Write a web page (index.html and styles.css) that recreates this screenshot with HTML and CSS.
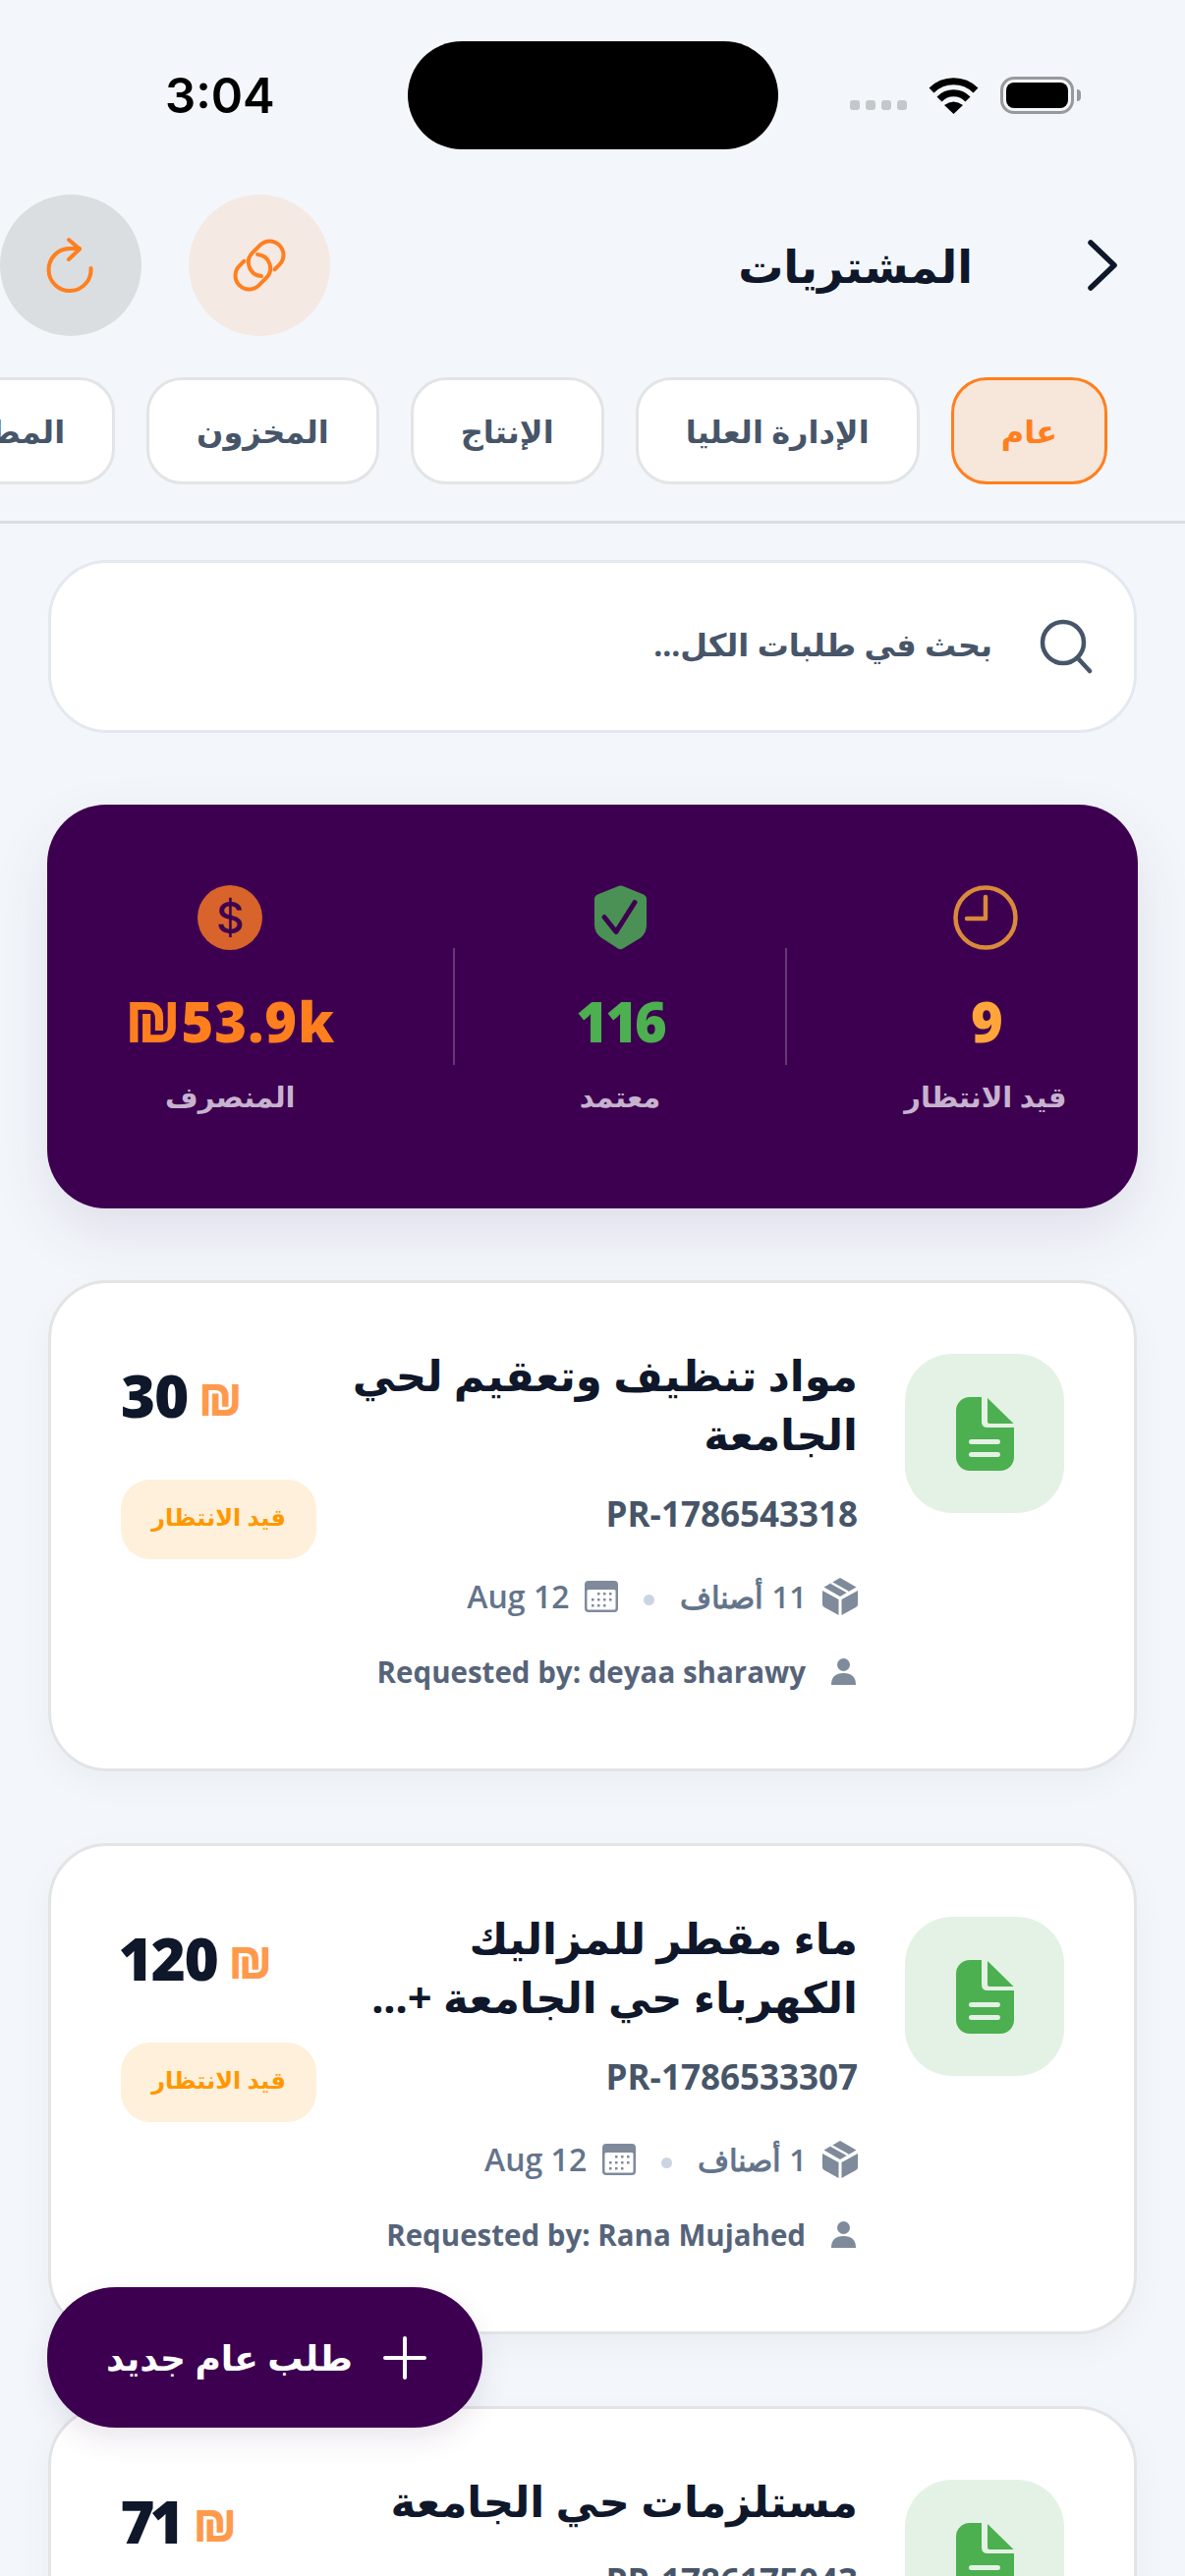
FILE: index.html
```html
<!DOCTYPE html>
<html lang="ar" dir="rtl">
<head>
    <meta charset="UTF-8">
    <meta name="viewport" content="width=device-width, initial-scale=1.0">
    <title>المشتريات</title>
    <link rel="stylesheet" href="styles.css">
</head>
<body>
<div class="screen">
    <div class="status-bar" dir="ltr">
        <span class="status-time">3:04</span>
        <div class="island"></div>
        <div class="status-icons">
            <div class="signal"><i></i><i></i><i></i><i></i></div>
            <svg class="wifi" width="51" height="37" viewBox="0 0 51 37">
                <path d="M3 13 A32 32 0 0 1 48 13" fill="none" stroke="#000" stroke-width="7"/>
                <path d="M11 22 A20 20 0 0 1 40 22" fill="none" stroke="#000" stroke-width="7"/>
                <path d="M25.5 37 L16 28 Q25.5 21 35 28 Z" fill="#000"/>
            </svg>
            <div class="battery"><div class="battery-fill"></div></div>
            <div class="battery-nub"></div>
        </div>
    </div>

    <div class="top-bar">
        <svg class="chevron" width="30" height="52" viewBox="0 0 30 52">
            <path d="M3 3 L27 26 L3 49" fill="none" stroke="#0f172a" stroke-width="5.5" stroke-linecap="round" stroke-linejoin="round"/>
        </svg>
        <h1 class="page-title">المشتريات</h1>
        <div class="top-actions">
            <div class="round-btn link-btn">
                <svg width="54" height="54" viewBox="0 0 54 54" fill="none" stroke="#ff7f1f" stroke-width="4" stroke-linecap="round">
                    <g transform="rotate(-45 27 27)">
                        <path d="M35 41 H41.8 A14 14 0 0 0 41.8 13 H31.2 A14 14 0 0 0 20.6 36.2"/>
                        <path d="M19 13 H12.2 A14 14 0 0 0 12.2 41 H22.8 A14 14 0 0 0 33.4 17.8"/>
                    </g>
                </svg>
            </div>
            <div class="round-btn refresh-btn">
                <svg width="54" height="54" viewBox="0 0 54 54" fill="none" stroke="#ff7f1f" stroke-width="4" stroke-linecap="round" stroke-linejoin="round">
                    <path d="M47.5 30 A21.5 21.5 0 1 1 26 10 H36"/>
                    <path d="M25 1 L36 10.5 L25 21"/>
                </svg>
            </div>
        </div>
    </div>

    <div class="tabs">
        <div class="tab tab-active">عام</div>
        <div class="tab">الإدارة العليا</div>
        <div class="tab">الإنتاج</div>
        <div class="tab">المخزون</div>
        <div class="tab">المطبخ</div>
    </div>

    <div class="search-box">
        <svg width="54" height="56" viewBox="0 0 54 56" fill="none" stroke="#475569" stroke-width="4.5" stroke-linecap="round">
            <circle cx="24" cy="24" r="21"/>
            <path d="M39 40 L51 53"/>
        </svg>
        <span class="search-text">بحث في طلبات الكل...</span>
    </div>

    <div class="stats-card">
        <div class="stat stat-pending">
            <svg class="stat-icon" width="66" height="66" viewBox="0 0 66 66" fill="none" stroke="#d98a3a" stroke-width="4.5" stroke-linecap="round" stroke-linejoin="round">
                <circle cx="33" cy="33" r="30.5"/>
                <path d="M33 12 V34 H14"/>
            </svg>
            <div class="stat-value value-orange">9</div>
            <div class="stat-label">قيد الانتظار</div>
        </div>
        <div class="stat-divider"></div>
        <div class="stat stat-approved">
            <svg class="stat-icon" width="53" height="66" viewBox="0 0 53 65">
                <path d="M26.5 0 Q28.5 0 30.5 1 L50 9 Q53 10.500 53 13 V40 Q53 48 47 53 L29 64 Q26.5 65.500 24 64 L7 53 Q0 48 0 40 V13 Q0 10.500 3 9 L23 1 Q25 0 26.5 0 Z" fill="#4b9155"/>
                <path d="M10 32 L22 47 L41 17" fill="none" stroke="#3d0050" stroke-width="5" stroke-linecap="round" stroke-linejoin="round"/>
            </svg>
            <div class="stat-value value-green">116</div>
            <div class="stat-label">معتمد</div>
        </div>
        <div class="stat-divider"></div>
        <div class="stat stat-spent">
            <div class="stat-icon dollar">$</div>
            <div class="stat-value value-deep" dir="ltr">₪53.9k</div>
            <div class="stat-label">المنصرف</div>
        </div>
    </div>

    <div class="card">
        <div class="doc-box">
            <svg width="59" height="75" viewBox="0 0 59 75">
                <path d="M14 0 H26 V25 Q26 31 32 31 H59 V61 A14 14 0 0 1 45 75 H14 A14 14 0 0 1 0 61 V14 A14 14 0 0 1 14 0 Z" fill="#4caf50"/>
                <path d="M32 1 L58.500 27 H34 Q32 27 32 25 Z" fill="#4caf50"/>
                <rect x="13" y="43" width="32" height="5" rx="2.500" fill="#e4f2e5"/>
                <rect x="13" y="56" width="32" height="5" rx="2.500" fill="#e4f2e5"/>
            </svg>
        </div>
        <div class="card-main">
            <div class="card-title">مواد تنظيف وتعقيم لحي<br>الجامعة</div>
            <div class="card-number" dir="ltr">PR-1786543318</div>
            <div class="card-meta">
                <svg width="36" height="38" viewBox="0 0 36 38" fill="#7f8a9b">
                    <path d="M18 0 L34.500 9.500 L18 19 L1.500 9.500 Z"/>
                    <path d="M9 5 L26 14.500" stroke="#fff" stroke-width="2.500"/>
                    <path d="M0 13 L16.500 22 V38 L2 30 Q0 29 0 27 Z"/>
                    <path d="M36 13 L19.500 22 V38 L34 30 Q36 29 36 27 Z"/>
                </svg>
                <span>11 أصناف</span>
                <i class="meta-dot"></i>
                <svg width="34" height="32" viewBox="0 0 34 32">
                    <rect width="34" height="32" rx="4" fill="#7f8a9b"/>
                    <rect x="2.500" y="9" width="29" height="20.500" rx="1.500" fill="#fff"/>
                    <g fill="#7f8a9b">
                        <rect x="13" y="12" width="2.500" height="2.500"/><rect x="19" y="12" width="2.500" height="2.500"/><rect x="25" y="12" width="2.500" height="2.500"/>
                        <rect x="7" y="18" width="2.500" height="2.500"/><rect x="13" y="18" width="2.500" height="2.500"/><rect x="19" y="18" width="2.500" height="2.500"/><rect x="25" y="18" width="2.500" height="2.500"/>
                        <rect x="7" y="24" width="2.500" height="2.500"/><rect x="13" y="24" width="2.500" height="2.500"/><rect x="19" y="24" width="2.500" height="2.500"/>
                    </g>
                </svg>
                <span class="meta-date" dir="ltr">Aug 12</span>
            </div>
            <div class="card-user">
                <svg width="25" height="27" viewBox="0 0 25 27" fill="#7f8a9b">
                    <circle cx="12.500" cy="6.500" r="6.500"/>
                    <path d="M0 27 Q0 15 12.500 15 T25 27 Z"/>
                </svg>
                <span dir="ltr">Requested by: deyaa sharawy</span>
            </div>
        </div>
        <div class="card-side">
            <div class="amount"><span class="shekel">₪</span><span>30</span></div>
            <div class="badge">قيد الانتظار</div>
        </div>
    </div>

    <div class="card">
        <div class="doc-box">
            <svg width="59" height="75" viewBox="0 0 59 75">
                <path d="M14 0 H26 V25 Q26 31 32 31 H59 V61 A14 14 0 0 1 45 75 H14 A14 14 0 0 1 0 61 V14 A14 14 0 0 1 14 0 Z" fill="#4caf50"/>
                <path d="M32 1 L58.500 27 H34 Q32 27 32 25 Z" fill="#4caf50"/>
                <rect x="13" y="43" width="32" height="5" rx="2.500" fill="#e4f2e5"/>
                <rect x="13" y="56" width="32" height="5" rx="2.500" fill="#e4f2e5"/>
            </svg>
        </div>
        <div class="card-main">
            <div class="card-title">ماء مقطر للمزاليك<br>الكهرباء حي الجامعة +...</div>
            <div class="card-number" dir="ltr">PR-1786533307</div>
            <div class="card-meta">
                <svg width="36" height="38" viewBox="0 0 36 38" fill="#7f8a9b">
                    <path d="M18 0 L34.500 9.500 L18 19 L1.500 9.500 Z"/>
                    <path d="M9 5 L26 14.500" stroke="#fff" stroke-width="2.500"/>
                    <path d="M0 13 L16.500 22 V38 L2 30 Q0 29 0 27 Z"/>
                    <path d="M36 13 L19.500 22 V38 L34 30 Q36 29 36 27 Z"/>
                </svg>
                <span>1 أصناف</span>
                <i class="meta-dot"></i>
                <svg width="34" height="32" viewBox="0 0 34 32">
                    <rect width="34" height="32" rx="4" fill="#7f8a9b"/>
                    <rect x="2.500" y="9" width="29" height="20.500" rx="1.500" fill="#fff"/>
                    <g fill="#7f8a9b">
                        <rect x="13" y="12" width="2.500" height="2.500"/><rect x="19" y="12" width="2.500" height="2.500"/><rect x="25" y="12" width="2.500" height="2.500"/>
                        <rect x="7" y="18" width="2.500" height="2.500"/><rect x="13" y="18" width="2.500" height="2.500"/><rect x="19" y="18" width="2.500" height="2.500"/><rect x="25" y="18" width="2.500" height="2.500"/>
                        <rect x="7" y="24" width="2.500" height="2.500"/><rect x="13" y="24" width="2.500" height="2.500"/><rect x="19" y="24" width="2.500" height="2.500"/>
                    </g>
                </svg>
                <span class="meta-date" dir="ltr">Aug 12</span>
            </div>
            <div class="card-user">
                <svg width="25" height="27" viewBox="0 0 25 27" fill="#7f8a9b">
                    <circle cx="12.500" cy="6.500" r="6.500"/>
                    <path d="M0 27 Q0 15 12.500 15 T25 27 Z"/>
                </svg>
                <span dir="ltr">Requested by: Rana Mujahed</span>
            </div>
        </div>
        <div class="card-side">
            <div class="amount"><span class="shekel">₪</span><span>120</span></div>
            <div class="badge">قيد الانتظار</div>
        </div>
    </div>

    <div class="card">
        <div class="doc-box">
            <svg width="59" height="75" viewBox="0 0 59 75">
                <path d="M14 0 H26 V25 Q26 31 32 31 H59 V61 A14 14 0 0 1 45 75 H14 A14 14 0 0 1 0 61 V14 A14 14 0 0 1 14 0 Z" fill="#4caf50"/>
                <path d="M32 1 L58.500 27 H34 Q32 27 32 25 Z" fill="#4caf50"/>
                <rect x="13" y="43" width="32" height="5" rx="2.500" fill="#e4f2e5"/>
                <rect x="13" y="56" width="32" height="5" rx="2.500" fill="#e4f2e5"/>
            </svg>
        </div>
        <div class="card-main">
            <div class="card-title">مستلزمات حي الجامعة</div>
            <div class="card-number" dir="ltr">PR-1786175043</div>
        </div>
        <div class="card-side">
            <div class="amount"><span class="shekel">₪</span><span>71</span></div>
        </div>
    </div>

    <div class="new-request">
        <svg width="44" height="44" viewBox="0 0 44 44" stroke="#fff" stroke-width="4" stroke-linecap="round">
            <path d="M22 2 V42 M2 22 H42"/>
        </svg>
        <span>طلب عام جديد</span>
    </div>
</div>
</body>
</html>
```

FILE: styles.css
```css
* {
    box-sizing: border-box;
}
body {
    margin: 0;
    background-color: #f3f7fb;
    font-family: "Noto Sans", "DejaVu Sans", sans-serif;
}
.screen {
    position: relative;
    width: 1206px;
    height: 2622px;
    overflow: hidden;
    background-color: #f3f7fb;
}

/* status bar */
.status-bar {
    display: flex;
    align-items: center;
    height: 198px;
    padding: 42px 0 46px 168px;
}
.status-time {
    width: 108px;
    font-family: Inter, sans-serif;
    font-size: 49px;
    font-weight: 600;
    color: #000;
}
.island {
    width: 377px;
    height: 110px;
    margin-left: 139px;
    background-color: #000;
    border-radius: 55px;
}
.status-icons {
    display: flex;
    align-items: center;
    margin-left: 73px;
}
.signal {
    display: flex;
    gap: 6px;
    margin: 20px 22px 0 0;
}
.signal i {
    width: 10px;
    height: 10px;
    background-color: #c4c8ca;
    border-radius: 3px;
}
.battery {
    width: 75px;
    height: 38px;
    margin-left: 22px;
    padding: 3px;
    border: 3px solid #98999b;
    border-radius: 14px;
}
.battery-fill {
    height: 100%;
    background-color: #000;
    border-radius: 8px;
}
.battery-nub {
    width: 4px;
    height: 12px;
    margin-left: 3px;
    background-color: #98999b;
    border-radius: 0 6px 6px 0;
}

/* top bar */
.top-bar {
    display: flex;
    align-items: center;
    height: 144px;
    padding-right: 69px;
}
.page-title {
    margin: 0 117px 0 0;
    font-size: 46px;
    font-weight: 800;
    color: #0f172a;
}
.top-actions {
    display: flex;
    gap: 48px;
    margin-right: auto;
}
.round-btn {
    display: flex;
    align-items: center;
    justify-content: center;
    width: 144px;
    height: 144px;
    border-radius: 50%;
}
.round-btn svg {
    overflow: visible;
}
.link-btn {
    background-color: #f5e9e4;
}
.refresh-btn {
    background-color: #dadee1;
}

/* tabs */
.tabs {
    display: flex;
    gap: 32px;
    margin-top: 42px;
    padding: 0 79px 37px 0;
    overflow: hidden;
    border-bottom: 3px solid #d9dee2;
}
.tab {
    flex-shrink: 0;
    height: 109px;
    padding: 0 48px;
    line-height: 103px;
    font-size: 32px;
    font-weight: 700;
    white-space: nowrap;
    color: #475569;
    background-color: #fff;
    border: 3px solid #e2e4e6;
    border-radius: 36px;
}
.tab-active {
    color: #ff7f1f;
    background-color: #f7e6da;
    border-color: #ff7f1f;
}

/* search */
.search-box {
    display: flex;
    align-items: center;
    gap: 48px;
    width: 1108px;
    height: 176px;
    margin: 37px 49px 0;
    padding-right: 42px;
    background-color: #fff;
    border: 3px solid #e4e9f0;
    border-radius: 60px;
}
.search-text {
    margin-bottom: 5px;
    font-size: 32px;
    font-weight: 700;
    color: #475569;
}

/* stats */
.stats-card {
    display: flex;
    align-items: center;
    justify-content: space-around;
    width: 1110px;
    height: 411px;
    margin: 73px 48px 0;
    padding: 0 14px 0 20px;
    background-color: #3d0050;
    border-radius: 60px;
    box-shadow: 0 24px 60px rgba(61, 0, 80, 0.1);
}
.stat {
    display: flex;
    flex-direction: column;
    align-items: center;
    white-space: nowrap;
}
.stat-pending {
    width: 162px;
}
.stat-approved {
    width: 96px;
}
.stat-spent {
    width: 212px;
}
.stat-icon {
    flex-shrink: 0;
    height: 66px;
}
.dollar {
    width: 66px;
    line-height: 66px;
    text-align: center;
    font-family: Inter, sans-serif;
    font-size: 44px;
    font-weight: 500;
    color: #3d0050;
    background-color: #d8642b;
    border-radius: 50%;
}
.stat-value {
    margin-top: 30px;
    line-height: 84px;
    font-family: "Open Sans", sans-serif;
    font-size: 56px;
    font-weight: 800;
    letter-spacing: -3px;
}
.value-orange {
    color: #ffa53a;
}
.value-green {
    color: #4caf50;
}
.value-deep {
    letter-spacing: 1px;
    color: #ff7f1f;
}
.stat-label {
    margin-top: 2px;
    line-height: 66px;
    font-size: 29px;
    font-weight: 600;
    color: #c7b3cf;
}
.stat-divider {
    width: 2px;
    height: 119px;
    background-color: rgba(255, 255, 255, 0.22);
}

/* request cards */
.card {
    display: flex;
    align-items: flex-start;
    width: 1108px;
    height: 500px;
    margin: 73px 49px 0;
    padding: 72px 71px 0;
    background-color: #fff;
    border: 3px solid #e2e4e6;
    border-radius: 60px;
    box-shadow: 0 12px 36px rgba(15, 23, 42, 0.04);
}
.doc-box {
    display: flex;
    flex-shrink: 0;
    align-items: center;
    justify-content: center;
    width: 162px;
    height: 162px;
    margin-left: 48px;
    background-color: #e4f2e5;
    border-radius: 48px;
}
.card-main {
    flex: 1;
    min-width: 0;
    margin-top: -9px;
}
.card-title {
    line-height: 60px;
    font-size: 43.5px;
    font-weight: 700;
    white-space: nowrap;
    color: #0f172a;
}
.card-number {
    margin-top: 29px;
    line-height: 46px;
    text-align: right;
    font-family: "Open Sans", sans-serif;
    font-size: 35px;
    font-weight: 700;
    color: #475569;
}
.card-meta {
    display: flex;
    align-items: center;
    gap: 16px;
    margin-top: 39px;
    font-family: "Open Sans", "Noto Sans", sans-serif;
    font-size: 31px;
    font-weight: 600;
    color: #64748b;
}
.meta-date {
    font-size: 32px;
}
.meta-dot {
    width: 11px;
    height: 11px;
    margin: 8px 10px 0;
    background-color: #cbd5e1;
    border-radius: 50%;
}
.card-user {
    display: flex;
    align-items: center;
    gap: 26px;
    margin-top: 35px;
    padding-right: 2px;
    font-family: "Open Sans", sans-serif;
    font-size: 29.5px;
    font-weight: 700;
    color: #56647a;
}
.card-side {
    display: flex;
    flex-direction: column;
    align-items: flex-end;
    flex-shrink: 0;
    width: 199px;
}
.amount {
    display: flex;
    align-items: center;
    justify-content: flex-end;
    gap: 11px;
    width: 100%;
    height: 84px;
    font-family: "Open Sans", sans-serif;
    font-size: 60px;
    font-weight: 800;
    font-variant-numeric: proportional-nums;
    letter-spacing: -2px;
    color: #0f172a;
}
.shekel {
    margin-top: 8px;
    font-size: 44px;
    letter-spacing: 0;
    color: #ff9a4d;
}
.badge {
    width: 199px;
    height: 81px;
    margin-top: 44px;
    line-height: 76px;
    text-align: center;
    font-size: 24px;
    font-weight: 700;
    white-space: nowrap;
    color: #ff9800;
    background-color: #fff0db;
    border-radius: 30px;
}

/* floating button */
.new-request {
    position: absolute;
    left: 48px;
    top: 2328px;
    display: flex;
    align-items: center;
    gap: 31px;
    width: 443px;
    height: 143px;
    padding-right: 57px;
    font-size: 36px;
    font-weight: 700;
    color: #fff;
    background-color: #3d0050;
    border-radius: 70px;
    box-shadow: 0 12px 30px rgba(61, 0, 80, 0.1);
}
```
